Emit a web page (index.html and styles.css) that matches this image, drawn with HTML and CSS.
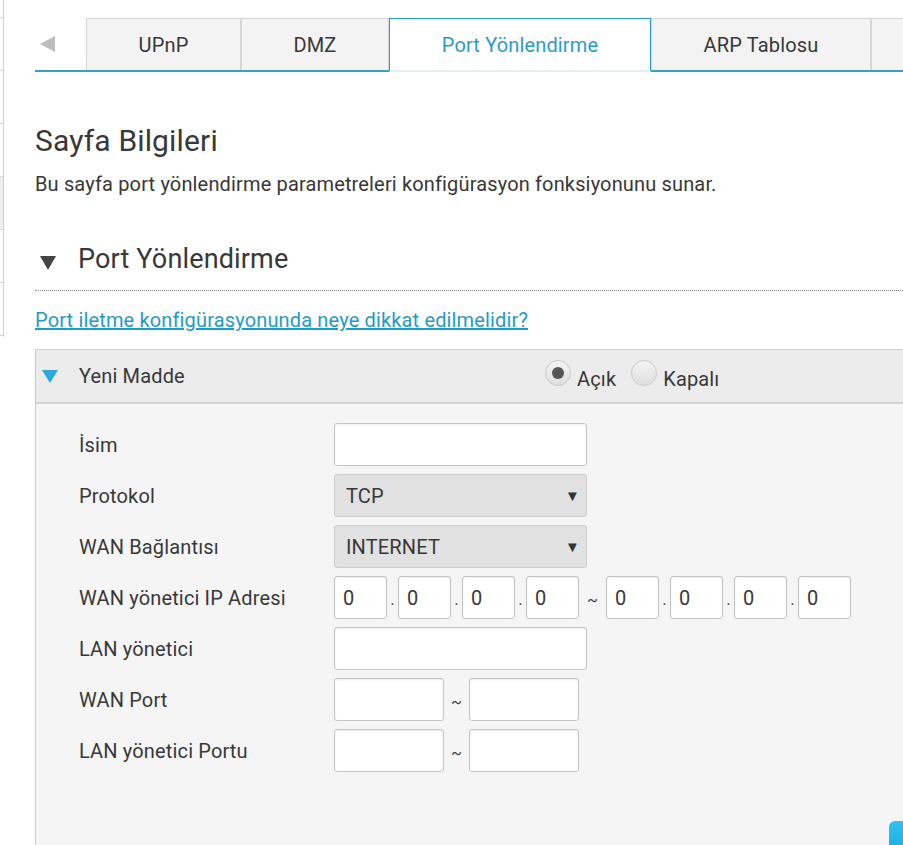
FILE: index.html
```html
<!DOCTYPE html>
<html lang="tr">
<head>
<meta charset="utf-8">
<title>Port Yönlendirme</title>
<link rel="stylesheet" href="styles.css">
</head>
<body>
<div class="page">
  <aside class="sidebar">
    <div class="sb-item"></div>
    <div class="sb-item"></div>
    <div class="sb-item"></div>
    <div class="sb-item sb-active"></div>
    <div class="sb-item"></div>
    <div class="sb-item"></div>
  </aside>
  <main class="main">
    <nav class="tabs">
      <div class="tab-prev"><span class="prev-arrow"></span></div>
      <div class="tab tab-upnp">UPnP</div>
      <div class="tab tab-dmz">DMZ</div>
      <div class="tab tab-port active">Port Yönlendirme</div>
      <div class="tab tab-arp">ARP Tablosu</div>
      <div class="tab tab-more"></div>
    </nav>

    <h1 class="page-title">Sayfa Bilgileri</h1>
    <p class="desc">Bu sayfa port yönlendirme parametreleri konfigürasyon fonksiyonunu sunar.</p>

    <h2 class="section-title"><span class="sec-tri"></span>Port Yönlendirme</h2>
    <div class="dotted"></div>
    <a class="help" href="#">Port iletme konfigürasyonunda neye dikkat edilmelidir?</a>

    <section class="panel">
      <div class="panel-head">
        <div class="ph-title"><span class="blue-tri"></span>Yeni Madde</div>
        <div class="radios">
          <span class="radio checked"></span><span class="radio-label">Açık</span>
          <span class="radio"></span><span class="radio-label">Kapalı</span>
        </div>
      </div>
      <div class="panel-body">
        <div class="row">
          <div class="label">İsim</div>
          <div class="field"><div class="input wide"></div></div>
        </div>
        <div class="row">
          <div class="label">Protokol</div>
          <div class="field"><div class="select"><span>TCP</span><span class="caret">▼</span></div></div>
        </div>
        <div class="row">
          <div class="label">WAN Bağlantısı</div>
          <div class="field"><div class="select"><span>INTERNET</span><span class="caret">▼</span></div></div>
        </div>
        <div class="row">
          <div class="label">WAN yönetici IP Adresi</div>
          <div class="field">
            <div class="input ip">0</div><span class="dot">.</span>
            <div class="input ip">0</div><span class="dot">.</span>
            <div class="input ip">0</div><span class="dot">.</span>
            <div class="input ip">0</div><span class="tilde">~</span>
            <div class="input ip">0</div><span class="dot">.</span>
            <div class="input ip">0</div><span class="dot">.</span>
            <div class="input ip">0</div><span class="dot">.</span>
            <div class="input ip">0</div>
          </div>
        </div>
        <div class="row">
          <div class="label">LAN yönetici</div>
          <div class="field"><div class="input wide"></div></div>
        </div>
        <div class="row">
          <div class="label">WAN Port</div>
          <div class="field"><div class="input port"></div><span class="tilde tilde-port">~</span><div class="input port"></div></div>
        </div>
        <div class="row">
          <div class="label">LAN yönetici Portu</div>
          <div class="field"><div class="input port"></div><span class="tilde tilde-port">~</span><div class="input port"></div></div>
        </div>
        <div class="actions"><span class="btn"></span></div>
      </div>
    </section>
  </main>
</div>
</body>
</html>
```

FILE: styles.css
```css
html, body {
  margin: 0;
  padding: 0;
  background: #fff;
}
body {
  font-family: Roboto, "Noto Sans", "Liberation Sans", sans-serif;
  color: #383838;
  letter-spacing: 0.15px;
  overflow: hidden;
}
.page {
  display: flex;
  width: 903px;
  height: 845px;
  overflow: hidden;
}

/* sidebar stub */
.sidebar {
  flex: none;
  width: 3px;
  border-right: 1px solid #cfcfcf;
  padding-top: 17px;
  height: 320px;
}
.sb-item {
  height: 52px;
  border-top: 1px solid #d6d6d6;
}
.sb-item:last-child {
  border-bottom: 1px solid #d6d6d6;
}
.sb-active {
  background: #eeeeee;
}

.main {
  flex: none;
  width: 1100px;
  padding-left: 31px;
}

/* tabs */
.tabs {
  display: flex;
  margin-top: 18px;
  height: 52px;
  border-bottom: 2px solid #35a0c8;
}
.tab-prev {
  width: 51px;
  display: flex;
  align-items: center;
  padding-left: 5px;
  box-sizing: border-box;
}
.prev-arrow {
  width: 0;
  height: 0;
  border-top: 8px solid transparent;
  border-bottom: 8px solid transparent;
  border-right: 15px solid #bdbdbd;
}
.tab {
  box-sizing: border-box;
  border: 1px solid #d6d6d6;
  border-bottom: none;
  background: #f3f3f3;
  display: flex;
  align-items: center;
  justify-content: center;
  font-size: 20px;
  color: #383838;
}
.tab-upnp { width: 155px; }
.tab-dmz { width: 148px; }
.tab-port { width: 262px; }
.tab-arp { width: 220px; }
.tab-more { width: 200px; }
.tab.active {
  background: #fff;
  border-color: #2e97bf;
  color: #2a9cc6;
  height: 54px;
  border-bottom: 2px solid #e6eef1;
}

/* headings */
.page-title {
  margin: 51px 0 0;
  font-size: 30px;
  font-weight: 400;
  line-height: 1.2;
}
.desc {
  margin: 13px 0 0;
  font-size: 20px;
  line-height: 1.2;
}
.section-title {
  margin: 47px 0 0;
  display: flex;
  align-items: center;
  font-size: 27px;
  font-weight: 400;
  line-height: 1.2;
}
.sec-tri {
  width: 0;
  height: 0;
  margin: 7px 22px 0 5px;
  border-left: 8px solid transparent;
  border-right: 8px solid transparent;
  border-top: 14px solid #454545;
}
.dotted {
  margin-top: 15px;
  border-top: 1px dotted #8a8a8a;
  width: 900px;
}
.help {
  display: inline-block;
  margin-top: 17px;
  font-size: 20px;
  line-height: 1.2;
  color: #1f9bc9;
  text-decoration: underline;
}

/* panel */
.panel {
  margin-top: 17px;
  width: 1000px;
  border-left: 1px solid #c8c8c8;
  border-top: 1px solid #d2d2d2;
  background: #f5f5f5;
}
.panel-head {
  display: flex;
  align-items: center;
  height: 52px;
  background: #ececec;
  border-bottom: 2px solid #d4d4d4;
}
.ph-title {
  width: 509px;
  display: flex;
  align-items: center;
  font-size: 20px;
}
.blue-tri {
  width: 0;
  height: 0;
  margin: 0 21px 0 6px;
  border-left: 8px solid transparent;
  border-right: 8px solid transparent;
  border-top: 13px solid #2ba8de;
}
.radios {
  display: flex;
  align-items: center;
  font-size: 20px;
}
.radio {
  box-sizing: border-box;
  width: 26px;
  height: 26px;
  border-radius: 50%;
  border: 1px solid #cacaca;
  background: linear-gradient(#f4f4f4, #dedede);
  display: flex;
  align-items: center;
  justify-content: center;
  margin-top: -6px;
}
.radio.checked::after {
  content: "";
  width: 12px;
  height: 12px;
  border-radius: 50%;
  background: #555;
}
.radio-label {
  margin: 6px 15px 0 6px;
}

.panel-body {
  padding: 19px 0 0 43px;
  display: flex;
  flex-direction: column;
  gap: 8px;
}
.row {
  display: flex;
  align-items: center;
  height: 43px;
}
.label {
  width: 255px;
  font-size: 20px;
}
.field {
  display: flex;
  align-items: center;
}
.input {
  box-sizing: border-box;
  height: 43px;
  border: 1px solid #c4c4c4;
  border-radius: 3px;
  background: #fff;
  box-shadow: inset 0 1px 2px rgba(0, 0, 0, 0.07);
  font-size: 20px;
  display: flex;
  align-items: center;
  padding-left: 8px;
}
.input.wide { width: 253px; }
.input.ip { width: 53px; }
.input.port { width: 110px; }
.dot {
  width: 11px;
  text-align: center;
  font-size: 17px;
  align-self: flex-end;
  margin-bottom: 10px;
  color: #444;
}
.tilde {
  width: 27px;
  text-align: center;
  font-size: 16px;
  color: #444;
  margin-top: 6px;
}
.tilde.tilde-port {
  width: 25px;
}
.select {
  box-sizing: border-box;
  width: 253px;
  height: 43px;
  border: 1px solid #cdcdcd;
  border-radius: 3px;
  background: #e1e1e1;
  display: flex;
  align-items: center;
  justify-content: space-between;
  padding: 0 6px 0 11px;
  font-size: 20px;
}
.caret {
  font-size: 15px;
  color: #333;
}
.actions {
  padding: 41px 0 0 810px;
}
.btn {
  display: block;
  width: 80px;
  height: 40px;
  border-radius: 6px;
  background: linear-gradient(#30c2f0, #17a6df);
}
```
